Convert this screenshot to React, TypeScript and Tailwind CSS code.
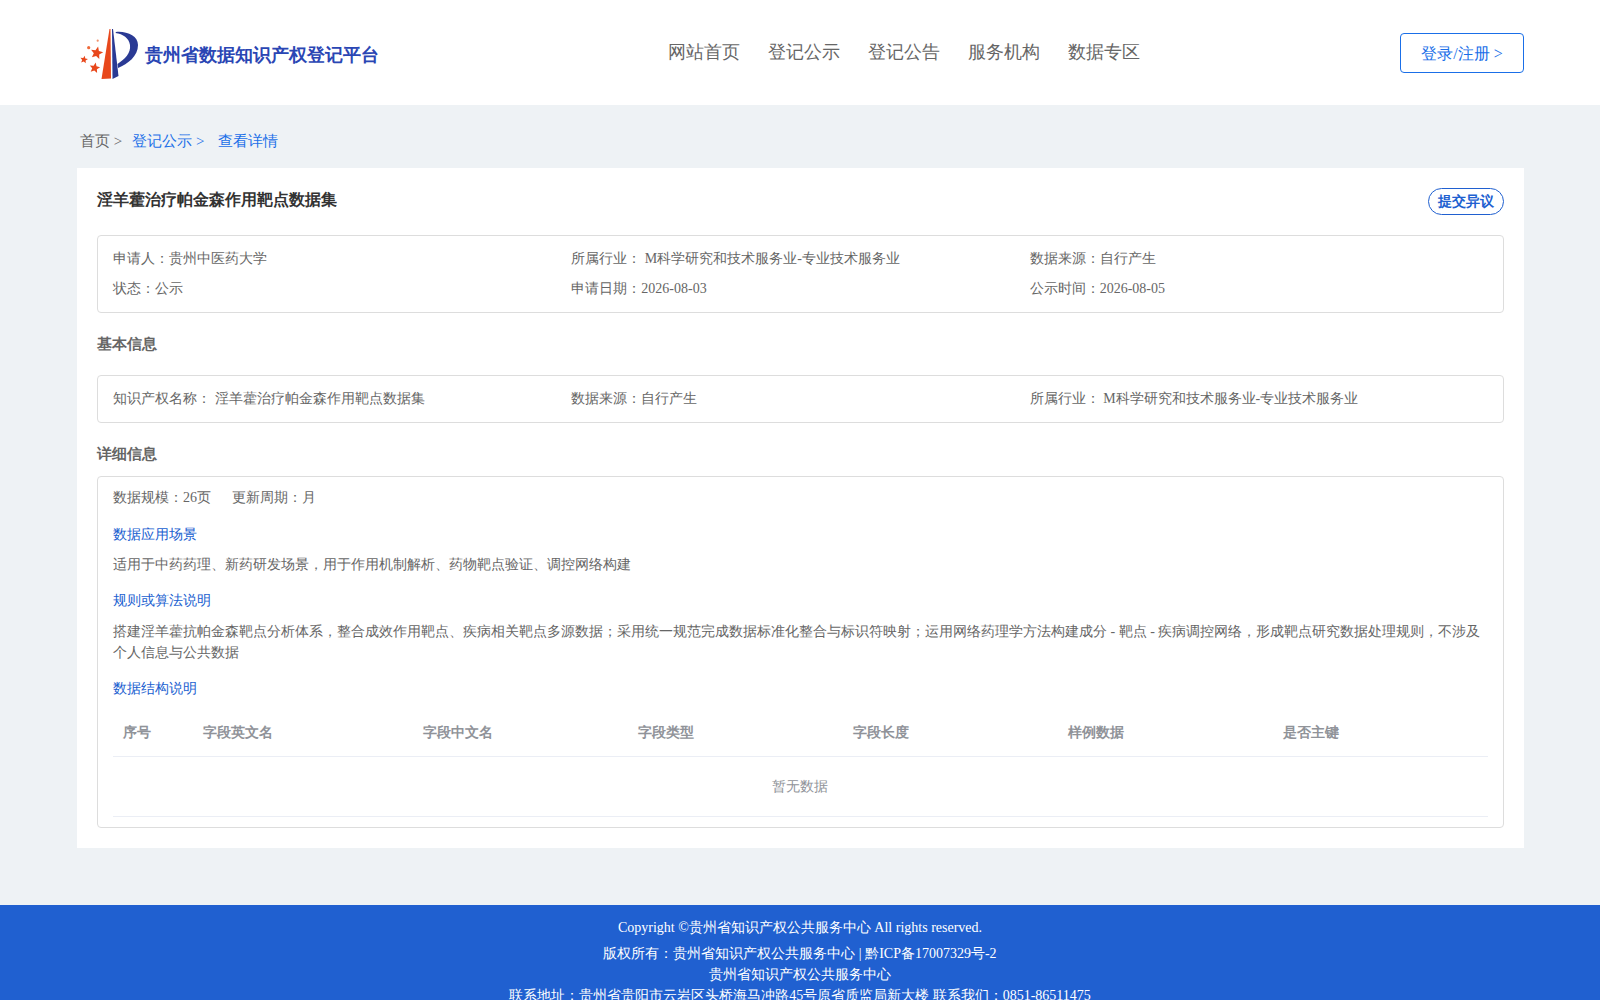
const FONT = 'font-["Liberation_Serif",serif]'

function star(cx: number, cy: number, r: number, rot: number) {
  const pts: string[] = []
  for (let i = 0; i < 10; i++) {
    const a = ((rot + i * 36 - 90) * Math.PI) / 180
    const d = i % 2 ? r * 0.45 : r
    pts.push(`${(cx + d * Math.cos(a)).toFixed(1)},${(cy + d * Math.sin(a)).toFixed(1)}`)
  }
  return pts.join(' ')
}

function Logo() {
  return (
    <svg width="60" height="56" viewBox="0 0 60 56" className="shrink-0">
      <path d="M21.500 53 L29.500 3 L30.500 3 L31 52.500 Z" fill="#e8481c" />
      <path d="M32 3 L33 3 L38.500 50 L32.500 53 Z" fill="#2a3a94" />
      <path d="M36 6 C47 5 58 10 58 19 C58 30 48 38 38 42 L37.500 38 C45 33 51 27 50 19 C49 12 43 8 35.500 7 Z" fill="#2a3a94" />
      <polygon points={star(16.700, 27, 6.500, 12)} fill="#e8481c" />
      <polygon points={star(14.700, 42, 5.500, 10)} fill="#e8481c" />
      <polygon points={star(4, 33.700, 4, 10)} fill="#e8481c" />
      <circle cx="8.700" cy="21.700" r="1.600" fill="#ef6a3a" />
      <circle cx="17.700" cy="14.700" r="1.100" fill="#f0916c" />
    </svg>
  )
}

const HEADS = ['序号', '字段英文名', '字段中文名', '字段类型', '字段长度', '样例数据', '是否主键']

export default function App() {
  return (
    <div className={`${FONT} min-h-screen bg-[#eef2f5] text-sm text-[#666]`}>
      <header className="h-[105px] bg-white pl-[77px] pr-[76px] flex items-center">
        <div className="w-[591px] flex items-center">
          <div className="pl-[3px] mt-[3px] flex items-center gap-[5px]">
            <Logo />
            <span className="text-lg font-bold text-[#2a46b4] mt-0.5">贵州省数据知识产权登记平台</span>
          </div>
        </div>
        <nav className="flex-1 flex gap-7 text-lg text-[#666] -mt-0.5">
          <a>网站首页</a>
          <a>登记公示</a>
          <a>登记公告</a>
          <a>服务机构</a>
          <a>数据专区</a>
        </nav>
        <button className="w-[124px] h-10 border border-[#1a6fe8] rounded text-base text-[#1a6fe8] pt-0.5">登录/注册 &gt;</button>
      </header>

      <main className="ml-[77px] mr-[76px] pb-[57px]">
        <div className="h-[63px] pl-[3px] flex items-center gap-2.5 text-[15px] pt-2.5">
          <span>首页 &gt;</span>
          <span className="text-[#1a6fe8]">登记公示 &gt;</span>
          <span className="text-[#1a6fe8] ml-1">查看详情</span>
        </div>

        <div className="bg-white p-5">
          <div className="flex justify-between items-start h-[47px]">
            <h1 className="text-base font-bold text-[#333] leading-6">淫羊藿治疗帕金森作用靶点数据集</h1>
            <button className="w-[76px] h-[27px] border border-[#2060d0] rounded-[14px] text-sm font-bold text-[#2060d0]">提交异议</button>
          </div>

          <div className="border border-[#ddd] rounded px-[15px] py-3 grid grid-cols-3 gap-y-2 leading-[22px]">
            <div>申请人：贵州中医药大学</div>
            <div>所属行业： M科学研究和技术服务业-专业技术服务业</div>
            <div>数据来源：自行产生</div>
            <div>状态：公示</div>
            <div>申请日期：2026-08-03</div>
            <div>公示时间：2026-08-05</div>
          </div>

          <h2 className="h-[62px] pt-0.5 flex items-center font-bold text-[15px]">基本信息</h2>
          <div className="border border-[#ddd] rounded px-[15px] h-12 grid grid-cols-3 items-center">
            <div>知识产权名称： 淫羊藿治疗帕金森作用靶点数据集</div>
            <div>数据来源：自行产生</div>
            <div>所属行业： M科学研究和技术服务业-专业技术服务业</div>
          </div>

          <h2 className="h-[53px] pt-2.5 flex items-center font-bold text-[15px]">详细信息</h2>
          <div className="border border-[#ddd] rounded px-[15px] pb-2.5 leading-[21px]">
            <div className="pt-2.5 flex gap-[21px]">
              <span>数据规模：26页</span>
              <span>更新周期：月</span>
            </div>
            <div className="mt-4 text-[#2060d0]">数据应用场景</div>
            <div className="mt-[9px]">适用于中药药理、新药研发场景，用于作用机制解析、药物靶点验证、调控网络构建</div>
            <div className="mt-[15px] text-[#2060d0]">规则或算法说明</div>
            <div className="mt-2.5">搭建淫羊藿抗帕金森靶点分析体系，整合成效作用靶点、疾病相关靶点多源数据；采用统一规范完成数据标准化整合与标识符映射；运用网络药理学方法构建成分 - 靶点 - 疾病调控网络，形成靶点研究数据处理规则，不涉及个人信息与公共数据</div>
            <div className="mt-[15px] text-[#2060d0]">数据结构说明</div>
            <table className="mt-[11px] w-full table-fixed">
              <colgroup>
                <col className="w-20" />
                <col className="w-[220px]" />
              </colgroup>
              <thead>
                <tr className="border-b border-[#ebeef5] h-[46px]">
                  {HEADS.map((h) => (
                    <th key={h} className="px-2.5 text-left font-bold text-[#909399]">{h}</th>
                  ))}
                </tr>
              </thead>
              <tbody>
                <tr className="border-b border-[#ebeef5] h-[60px]">
                  <td colSpan={7} className="text-center text-[#909399] pr-0.5">暂无数据</td>
                </tr>
              </tbody>
            </table>
          </div>
        </div>
      </main>

      <footer className="bg-[#2060d0] text-white text-center pt-3 pb-5 leading-[21px]">
        <div className="mb-[5px]">Copyright ©贵州省知识产权公共服务中心 All rights reserved.</div>
        <div>版权所有：贵州省知识产权公共服务中心 | 黔ICP备17007329号-2</div>
        <div>贵州省知识产权公共服务中心</div>
        <div>联系地址：贵州省贵阳市云岩区头桥海马冲路45号原省质监局新大楼 联系我们：0851-86511475</div>
      </footer>
    </div>
  )
}
